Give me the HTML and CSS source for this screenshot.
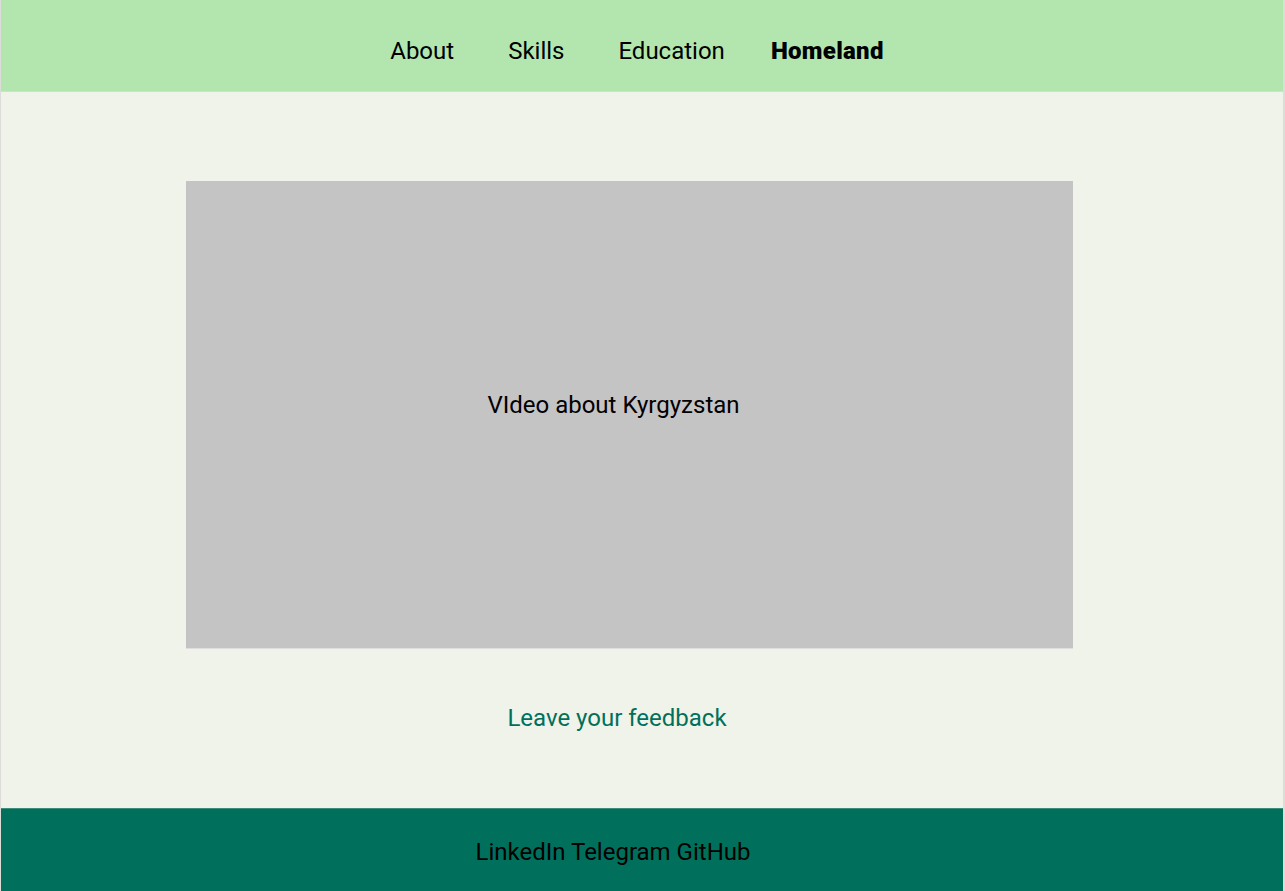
FILE: index.html
```html
<!DOCTYPE html>
<html lang="en">
<head>
<meta charset="utf-8">
<title>Homeland</title>
<link rel="stylesheet" href="styles.css">
</head>
<body>
<div class="page">
  <header class="header">
    <nav class="nav">
      <a class="nav-link" href="#">About</a>
      <a class="nav-link" href="#">Skills</a>
      <a class="nav-link" href="#">Education</a>
      <a class="nav-link active" href="#">Homeland</a>
    </nav>
  </header>
  <main class="main">
    <div class="video">
      <span class="video-label">VIdeo about Kyrgyzstan</span>
    </div>
    <a class="feedback" href="#">Leave your feedback</a>
  </main>
  <footer class="footer">
    <span class="footer-links">LinkedIn Telegram GitHub</span>
  </footer>
</div>
</body>
</html>
```
FILE: styles.css
```css
* { box-sizing: border-box; }
html, body { margin: 0; padding: 0; }
body {
  font-family: Roboto, "Liberation Sans", sans-serif;
  background: #f0f3e9;
  color: #000;
}
.page {
  width: 1285px;
  height: 891px;
  display: flex;
  flex-direction: column;
  border-left: 1px solid #dcdcd8;
  border-right: 2px solid #dcdcd8;
  overflow: hidden;
}
.header {
  height: 92px;
  background: #b3e6ae;
  border-bottom: 1px solid #c5e8bf;
  display: flex;
  align-items: center;
  justify-content: center;
  padding-right: 10px;
  padding-top: 10px;
}
.nav {
  display: flex;
  align-items: center;
}
.nav-link {
  font-size: 24px;
  color: #000;
  text-decoration: none;
  margin-right: 54px;
}
.nav-link:nth-child(3) { margin-right: 46px; }
.nav-link:last-child { margin-right: 0; }
.nav-link.active {
  font-weight: 900;
  letter-spacing: 0.3px;
}
.main {
  flex: 1;
  display: flex;
  flex-direction: column;
  align-items: center;
  padding-top: 89px;
}
.video {
  width: 887px;
  height: 467px;
  margin-left: -26px;
  background: #c4c4c4;
  box-shadow: 0 1px 0 #dedede;
  display: flex;
  align-items: center;
  justify-content: center;
  padding-right: 31px;
  padding-bottom: 19px;
}
.video-label {
  font-size: 24px;
  color: #000;
}
.feedback {
  margin-top: 56px;
  margin-left: -50px;
  font-size: 24px;
  color: #00705c;
  text-decoration: none;
}
.footer {
  height: 83px;
  background: #00705c;
  border-top: 1px solid #3d8d7d;
  display: flex;
  align-items: center;
  justify-content: center;
  padding-right: 58px;
  padding-top: 3px;
}
.footer-links {
  font-size: 24px;
  color: #000;
}
```
